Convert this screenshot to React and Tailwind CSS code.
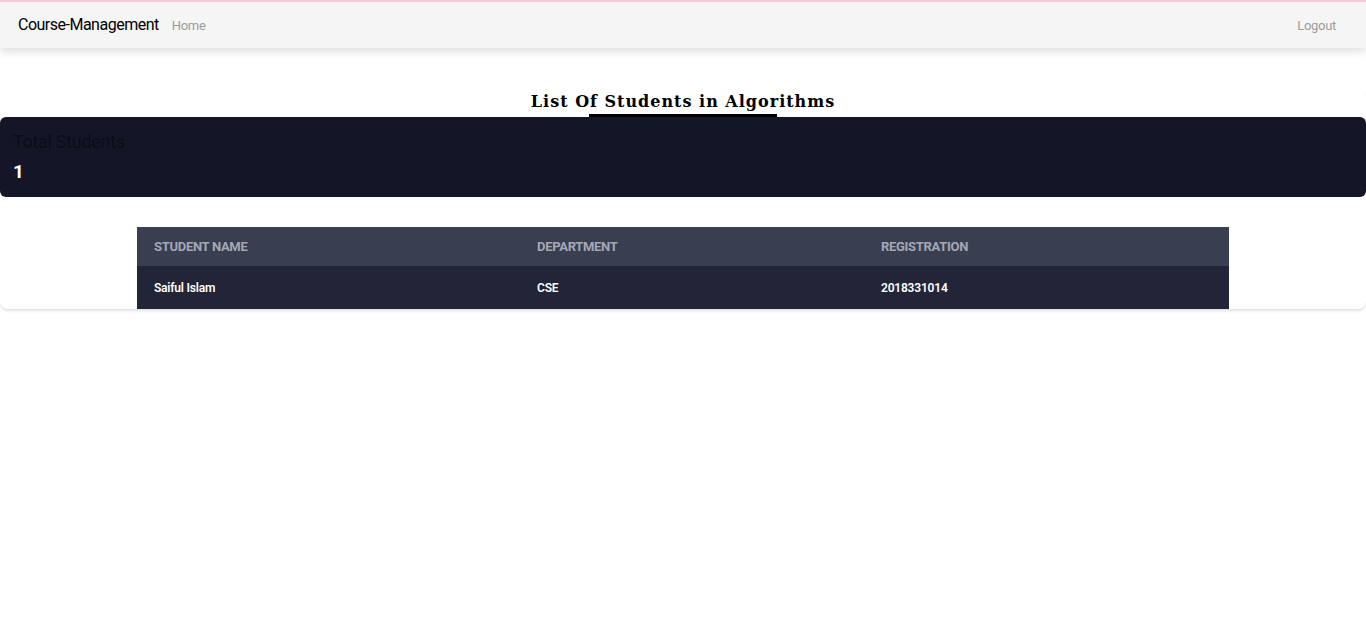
import React from "react";

const students = [
  { name: "Saiful Islam", department: "CSE", registration: "2018331014" },
];

const Navbar = () => {
  return (
    <div className="border-t-2 border-[#f9c8da] bg-[#f5f5f5] shadow-[0_4px_8px_rgba(0,0,0,0.12)]">
      <div className="flex h-[46px] items-center justify-between pl-[18px] pr-[30px]">
        <div className="flex items-center gap-[13px]">
          <span className="text-[16px] tracking-[-0.5px] text-black">Course-Management</span>
          <span className="pt-[2px] text-[13px] tracking-[-0.3px] text-[#9c9c9c]">Home</span>
        </div>
        <span className="pt-[2px] text-[13px] tracking-[-0.3px] text-[#9c9c9c]">Logout</span>
      </div>
    </div>
  );
};

const StudentTable = () => {
  return (
    <div className="flex justify-center pt-[30px]">
      <table className="w-[1092px] table-fixed border-collapse text-left">
        <thead>
          <tr className="h-[39px] bg-[#393e51]">
            <th className="w-[383px] pl-[17px] text-[13px] font-bold uppercase tracking-[-0.3px] text-[#a4a8b5]">
              Student Name
            </th>
            <th className="w-[344px] pl-[17px] text-[13px] font-bold uppercase tracking-[-0.3px] text-[#a4a8b5]">
              Department
            </th>
            <th className="pl-[17px] text-[13px] font-bold uppercase tracking-[-0.3px] text-[#a4a8b5]">
              Registration
            </th>
          </tr>
        </thead>
        <tbody>
          {students.map((s) => (
            <tr key={s.registration} className="h-[43px] bg-[#212537]">
              <td className="pl-[17px] text-[12px] font-semibold tracking-[-0.2px] text-white">{s.name}</td>
              <td className="pl-[17px] text-[12px] font-semibold tracking-[-0.2px] text-white">{s.department}</td>
              <td className="pl-[17px] text-[12px] font-semibold tracking-[-0.2px] text-white">{s.registration}</td>
            </tr>
          ))}
        </tbody>
      </table>
    </div>
  );
};

export default function App() {
  return (
    <div className="min-h-screen bg-white font-['Roboto',sans-serif]">
      <Navbar />
      <div className="mt-[42px] rounded-lg bg-white shadow-[0_2px_3px_rgba(0,0,0,0.12)]">
        <div className="flex flex-col items-center">
          <h1 className="font-['DejaVu_Serif',serif] text-[16px] font-bold leading-[24px] tracking-[1px] text-black">
            List Of Students in Algorithms
          </h1>
          <div className="h-[3px] w-[188px] bg-black"></div>
        </div>
        <div className="rounded-md bg-[#141627] px-[13px] pb-[12px] pt-[12px]">
          <div className="text-[18px] leading-[26px] tracking-[-0.3px] text-[#0b0c14]">Total Students</div>
          <div className="mt-[4px] text-[19px] font-bold leading-[26px] text-white">1</div>
        </div>
        <StudentTable />
      </div>
    </div>
  );
}
